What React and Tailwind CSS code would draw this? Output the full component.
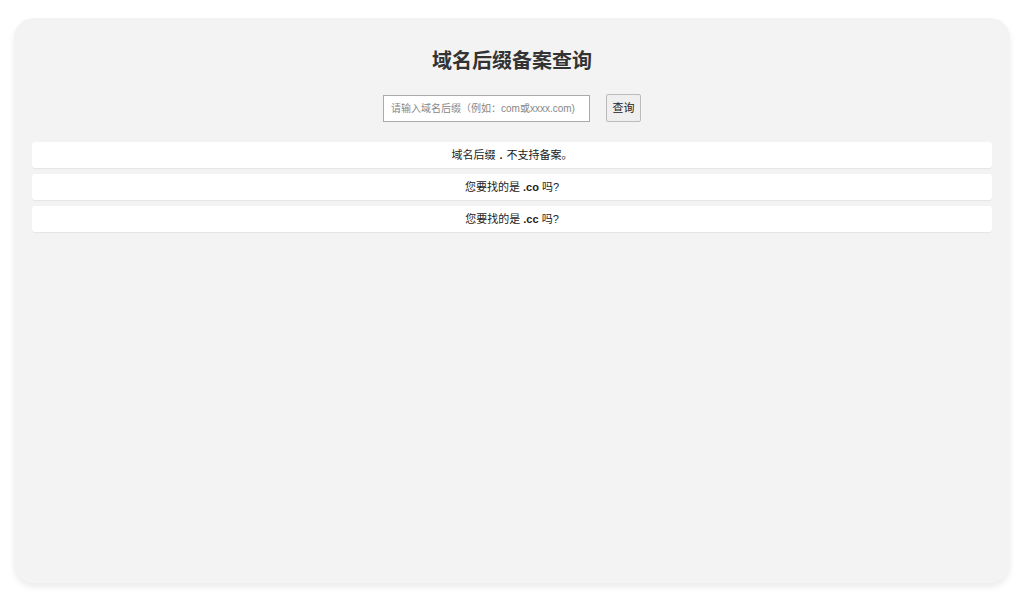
export default function App() {
  const f = { fontFamily: '"Liberation Sans", "Noto Sans CJK SC", sans-serif' };
  return (
    <div className="w-[1024px] h-[593px] bg-white pt-[18px] px-[14px]" style={f}>
      <div className="h-[565px] rounded-[20px] bg-[#f3f3f3] shadow-[0_4px_6px_rgba(0,0,0,0.08)] px-[18px] pt-[30px]">
        <h1 className="text-center text-[20px] font-bold text-[#333] leading-[26px]">域名后缀备案查询</h1>
        <div className="flex justify-center items-center gap-4 mt-[20px]">
          <input className="w-[207px] h-[27px] border border-[#aaa] bg-white pl-[7px] pr-0 text-[10px] outline-none placeholder:text-[#888]" placeholder="请输入域名后缀（例如：com或xxxx.com)" />
          <button className="w-[35px] h-[28px] border border-[#bbb] bg-[#efefef] text-[11px] text-[#222] rounded-[2px]">查询</button>
        </div>
        <div className="mt-[20px] flex flex-col gap-[6px]">
          <div className="h-[26px] bg-white rounded-[3px] shadow-[0_1px_1px_rgba(0,0,0,0.06)] flex items-center justify-center text-[11px] text-[#222]">域名后缀 <b className="mx-1">.</b> 不支持备案。</div>
          <div className="h-[26px] bg-white rounded-[3px] shadow-[0_1px_1px_rgba(0,0,0,0.06)] flex items-center justify-center text-[11px] text-[#222]">您要找的是&nbsp;<b>.co</b>&nbsp;吗?</div>
          <div className="h-[26px] bg-white rounded-[3px] shadow-[0_1px_1px_rgba(0,0,0,0.06)] flex items-center justify-center text-[11px] text-[#222]">您要找的是&nbsp;<b>.cc</b>&nbsp;吗?</div>
        </div>
      </div>
    </div>
  );
}
